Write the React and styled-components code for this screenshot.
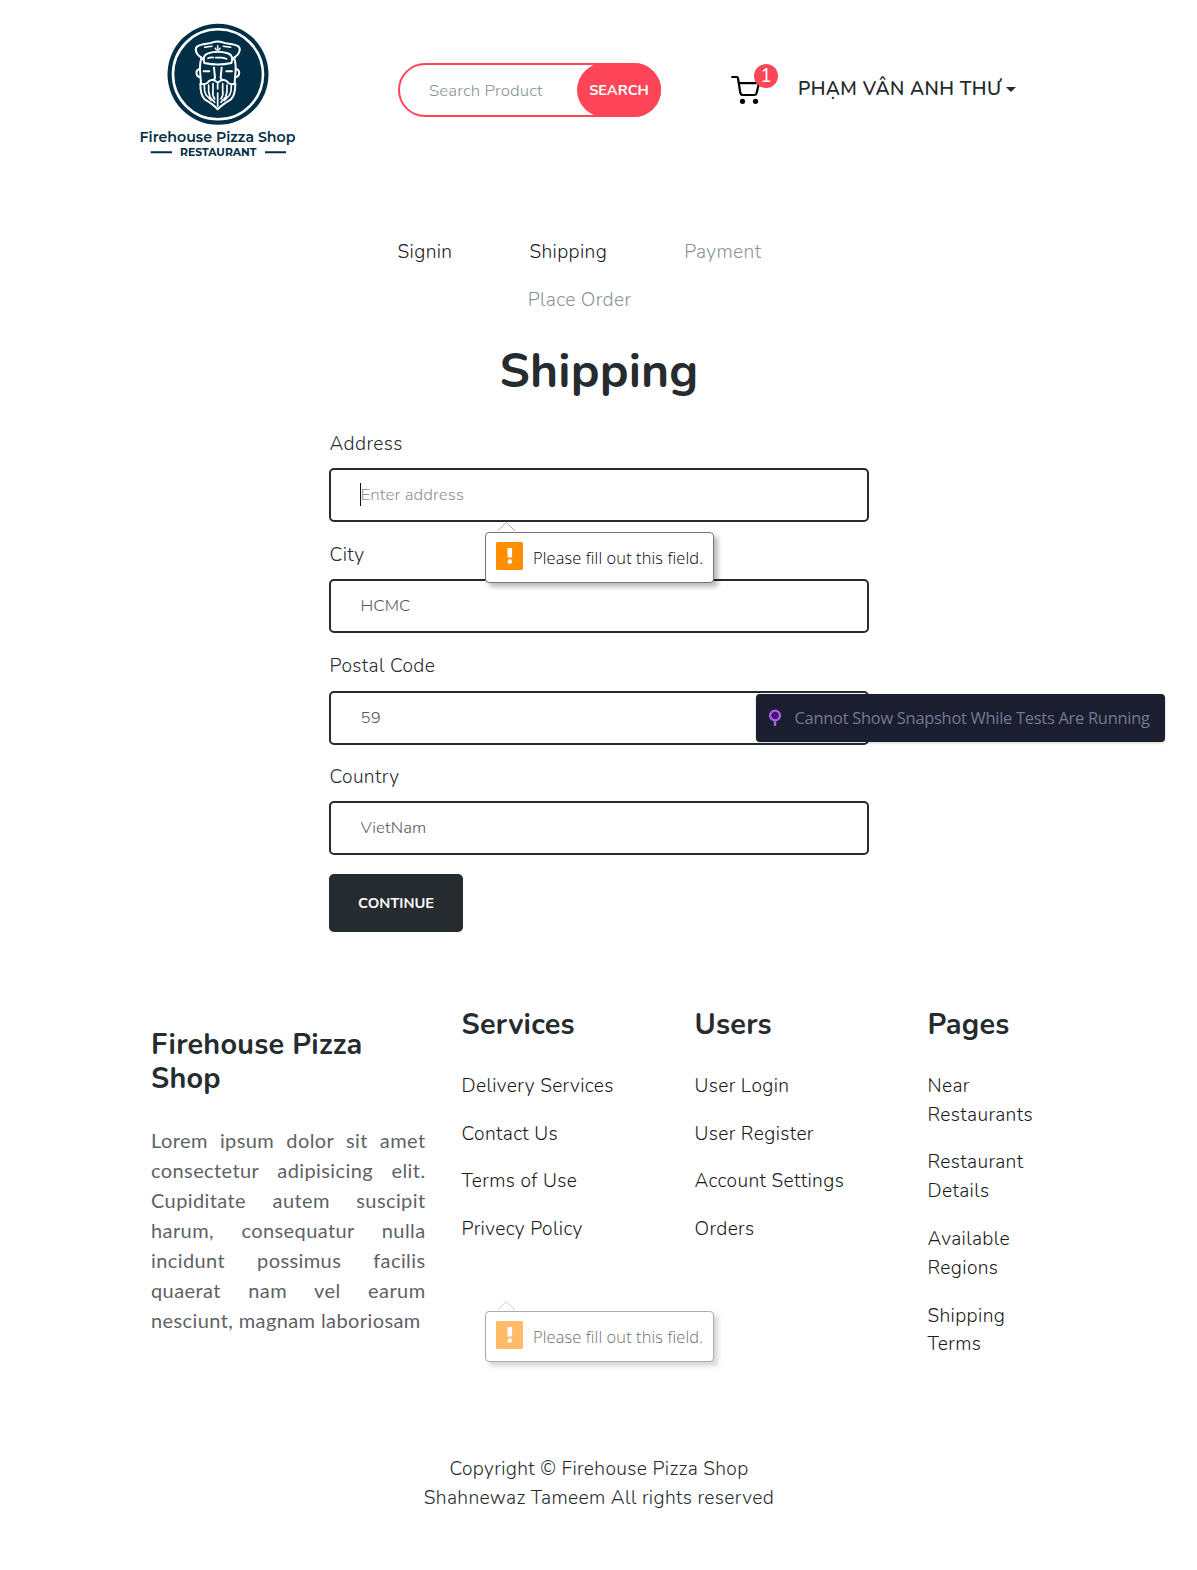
import React from 'react';
import styled, { createGlobalStyle } from 'styled-components';

const ink = '#252b2e';
const red = '#ff4557';
const navy = '#032f46';
const muted = '#8a9499';

const GlobalStyle = createGlobalStyle`
  * { box-sizing: border-box; }
  body {
    margin: 0;
    background: #fff;
    color: ${ink};
    font: 350 19.2px/28.8px Nunito, Lato, sans-serif;
    letter-spacing: 0.36px;
  }
  ul { list-style: none; margin: 0; padding: 0; }
  a { color: inherit; text-decoration: none; }
`;

const Page = styled.div`
  position: relative;
  min-height: 1570px;
  overflow: hidden;
`;

const Header = styled.header`
  display: flex;
  align-items: center;
  height: 179px;
  padding-left: 138px;
`;

const LogoSvg = styled.svg`
  display: block;
  width: 160px;
  height: 144px;
  margin-right: 100px;
  overflow: visible;
`;

const SearchForm = styled.form`
  display: flex;
  width: 263px;
  height: 54px;
  border: 2px solid ${red};
  border-radius: 27px;
  margin-right: 70px;
`;

const SearchInput = styled.input`
  flex: 1;
  min-width: 0;
  border: 0;
  outline: 0;
  padding: 1px 0 0 29px;
  background: transparent;
  font: 350 16.8px Nunito, Lato, sans-serif;
  letter-spacing: 0.12px;
  &::placeholder { color: ${muted}; opacity: 1; }
`;

const SearchButton = styled.button`
  width: 84px;
  margin: -2px -2px -2px 0;
  padding: 0;
  border: 0;
  border-radius: 27px;
  background: ${red};
  color: #fff;
  font: 700 14.6px Nunito, Lato, sans-serif;
  letter-spacing: 0;
`;

const CartLink = styled.a`
  position: relative;
  display: block;
  width: 30px;
  height: 30px;
  margin-right: 37px;
  svg { display: block; }
`;

const CartBadge = styled.span`
  position: absolute;
  left: 23px;
  top: -11px;
  width: 24px;
  height: 24px;
  border-radius: 50%;
  background: ${red};
  color: #fff;
  font-size: 19.2px;
  font-weight: 400;
  line-height: 24px;
  text-align: center;
  letter-spacing: 0;
`;

const UserMenu = styled.a`
  display: flex;
  align-items: center;
  gap: 5px;
  font-weight: 600;
  letter-spacing: 0.39px;
  white-space: nowrap;
`;

const Caret = styled.span`
  border: 5px solid transparent;
  border-top-color: ${ink};
  border-bottom: 0;
`;

const Steps = styled.nav`
  display: flex;
  flex-wrap: wrap;
  justify-content: center;
  width: 500px;
  margin: 49px auto 0;
  padding-right: 38px;
`;

const Step = styled.a`
  padding: 10px 38.5px 9px;
  line-height: 29px;
  color: ${p => (p.$muted ? muted : '#1a1a1a')};
`;

const FormSection = styled.main`
  width: 540px;
  margin: 19px auto 0;
`;

const Title = styled.h1`
  margin: 0 0 30px;
  padding-left: 1px;
  font-size: 48px;
  line-height: 57px;
  font-weight: 700;
  text-align: center;
  letter-spacing: 0.2px;
`;

const Field = styled.label`
  display: block;
  margin-bottom: ${p => (p.$loose ? 18 : 19)}px;
`;

const FieldLabel = styled.span`
  display: block;
  height: ${p => (p.$loose ? 39 : 38)}px;
  padding-left: 1px;
`;

const FieldInput = styled.input`
  display: block;
  width: 100%;
  height: 54px;
  border: 2px solid ${ink};
  border-radius: 5px;
  padding: 0 29px 1px 30px;
  outline: 0;
  background: #fff;
  color: #55595c;
  font: 360 16.8px Nunito, Lato, sans-serif;
  letter-spacing: 0.12px;
  &::placeholder { color: ${muted}; opacity: 1; }
`;

const InputWrap = styled.span`
  position: relative;
  display: block;
`;

const TextCursor = styled.span`
  position: absolute;
  left: 31px;
  top: 15px;
  width: 1px;
  height: 23px;
  background: #111;
`;

const ContinueButton = styled.button`
  display: block;
  width: 134px;
  height: 58px;
  border: 0;
  border-radius: 5px;
  padding: 0 5px 0 6px;
  background: ${ink};
  color: #fff;
  font: 700 14.7px Nunito, Lato, sans-serif;
  letter-spacing: 0;
`;

const Footer = styled.footer`
  margin-top: 76px;
`;

const FooterGrid = styled.div`
  display: grid;
  grid-template-columns: 274.5px 197px 197px 126px;
  column-gap: 36px;
  height: 447px;
  padding-left: 151px;
`;

const About = styled.section`
  padding-top: 20px;
`;

const FooterHeading = styled.h2`
  margin: 0;
  font-size: 28.8px;
  line-height: 34.3px;
  font-weight: 700;
  letter-spacing: 0.24px;
`;

const AboutText = styled.p`
  margin: 28px 0 0;
  color: #5e6265;
  font: 400 20px/30px Lato, sans-serif;
  letter-spacing: 0.4px;
  text-align: justify;
`;

const LinkList = styled.ul`
  display: grid;
  gap: 19px;
  padding-top: 29.5px;
  color: #1a1a1a;
`;

const LinkItem = styled.li`
  width: ${p => (p.$narrow ? '126px' : 'auto')};
`;

const Copyright = styled.p`
  margin: 0;
  padding-left: 1px;
  text-align: center;
`;

const Hint = styled.div`
  position: absolute;
  left: 485px;
  top: ${p => p.$top}px;
  display: flex;
  align-items: center;
  width: 229px;
  height: 51px;
  padding: 0 0 0 10px;
  border: 1px solid #767676;
  border-radius: 4px;
  background: #fff;
  box-shadow: 4px 4px 5px rgba(0, 0, 0, 0.27);
  opacity: ${p => (p.$faded ? 0.6 : 1)};
  color: #000;
  font: 330 16.4px/24px "Segoe UI", "Open Sans", sans-serif;
  letter-spacing: 0.12px;
  white-space: nowrap;
`;

const HintArrow = styled.svg`
  position: absolute;
  left: 10px;
  top: -11px;
`;

const HintIcon = styled.svg`
  flex: none;
  margin: -4px 10px 0 0;
`;

const Snackbar = styled.div`
  position: absolute;
  left: 756px;
  top: 694px;
  display: flex;
  align-items: center;
  gap: 12.500px;
  width: 409px;
  height: 48px;
  padding-left: 12px;
  border-radius: 4px;
  background: #1b1e2e;
  box-shadow: 0 1px 3px rgba(0, 0, 0, 0.2);
  color: #747994;
  font: 370 16.4px/24px "Segoe UI", "Open Sans", sans-serif;
  letter-spacing: -0.25px;
  white-space: nowrap;
`;

function Logo() {
  return (
    <LogoSvg viewBox="138 18 160 144">
      <circle cx="218" cy="74.3" r="50.5" fill={navy} />
      <circle cx="218" cy="74.3" r="45" fill="none" stroke="#fff" strokeWidth="2.6" />
      <g
        transform="translate(160 15) scale(0.3333)"
        fill="none"
        stroke="#fff"
        strokeWidth="6"
        strokeLinecap="round"
        strokeLinejoin="round"
      >
        <path d="M122 126C106 116 104 100 112 94C124 86 148 87 158 82Q173 77 188 82C198 87 222 86 235 94C243 101 240 116 225 126" />
        <path d="M133 144C128 130 132 119 144 115Q173 106 203 115C216 119 220 130 214 144Q173 153 133 144Z" />
        <path d="M122 126L131 134M225 126L216 134" />
        <path d="M144 130Q152 126 160 128M167 128H184Q194 129 200 132" strokeWidth="5" />
        <path d="M134 97L156 94M190 94L212 97M173 92V104M166 100Q167 105 173 105Q179 105 180 100" strokeWidth="4.500" />
        <path d="M124 130Q118 150 121 178L123 206M223 130Q229 150 226 178L224 206" />
        <path d="M118 162Q107 166 110 178Q112 186 120 187M229 162Q240 166 237 178Q235 186 227 187" />
        <path d="M131 169H148M199 169H216M162 158L165 188Q165 192 160 194M185 158L182 188Q182 192 187 194" />
        <path d="M173 203C160 190 148 194 142 204Q132 210 121 206Q121 240 134 253Q160 268 173 283Q187 268 213 253Q226 240 226 206Q214 210 205 204C199 194 187 190 173 203Z" />
        <path d="M133 212Q132 228 138 240M146 210Q144 230 150 246M159 206V226Q156 240 164 252M173 206V222M188 206V226Q191 240 183 252M201 210Q203 230 197 246M214 212Q215 228 209 240M173 234V274M138 240L154 256M209 240L193 256M150 246L164 262M197 246L183 262" strokeWidth="5" />
      </g>
      <g fill={navy} fontFamily="Montserrat, Lato, sans-serif" letterSpacing="0">
        <text x="139.500" y="141.700" fontSize="15" fontWeight="650" textLength="156" lengthAdjust="spacingAndGlyphs">Firehouse Pizza Shop</text>
        <text x="180" y="156" fontSize="10.800" fontWeight="700" textLength="76.500" lengthAdjust="spacingAndGlyphs">RESTAURANT</text>
        <path d="M150.700 151.300H172V153.300H150.700ZM265 151.300H286V153.300H265Z" />
      </g>
    </LogoSvg>
  );
}

function CartIcon() {
  return (
    <svg width="30" height="30" viewBox="0 0 30 30" fill="none" stroke="#000" strokeWidth="2.200" strokeLinecap="round" strokeLinejoin="round">
      <path d="M1.200 2H5.800Q6.800 2 7 3.200L9.300 17.800Q9.700 20 12 20H23.200Q25 20 25.500 18.200L28 8.200H7.800" />
      <circle cx="11.500" cy="26.300" r="2.600" fill="#000" stroke="none" />
      <circle cx="24.500" cy="26.300" r="2.600" fill="#000" stroke="none" />
    </svg>
  );
}

function ValidationHint({ top, faded }) {
  return (
    <Hint $top={top} $faded={faded}>
      <HintArrow width="20" height="9" viewBox="0 0 20 9">
        <path d="M1.500 9L10.200 0.500L19 9" fill="#fff" stroke="#a8a8a8" />
      </HintArrow>
      <HintIcon width="27" height="28" viewBox="0 0 27 28">
        <rect width="27" height="28" rx="1.500" fill="#ff8f00" />
        <rect x="11.500" y="6" width="4.600" height="9.500" fill="#fff" />
        <circle cx="13.800" cy="19.500" r="2.300" fill="#fff" />
      </HintIcon>
      Please fill out this field.
    </Hint>
  );
}

function PinIcon() {
  return (
    <svg width="14" height="18" viewBox="0 0 14 18">
      <path d="M7 11V17" stroke="#a561e6" strokeWidth="2.400" />
      <circle cx="7" cy="6.500" r="4.900" fill="#4a1277" stroke="#a561e6" strokeWidth="2.400" />
    </svg>
  );
}

const steps = [
  { name: 'Signin' },
  { name: 'Shipping' },
  { name: 'Payment', muted: true },
  { name: 'Place Order', muted: true },
];

const fields = [
  { name: 'Address', placeholder: 'Enter address', focused: true },
  { name: 'City', value: 'HCMC' },
  { name: 'Postal Code', value: '59', loose: true },
  { name: 'Country', value: 'VietNam' },
];

const columns = [
  { title: 'Services', links: ['Delivery Services', 'Contact Us', 'Terms of Use', 'Privecy Policy'] },
  { title: 'Users', links: ['User Login', 'User Register', 'Account Settings', 'Orders'] },
  { title: 'Pages', narrow: true, links: ['Near Restaurants', 'Restaurant Details', 'Available Regions', 'Shipping Terms'] },
];

export default function App() {
  return (
    <Page>
      <GlobalStyle />
      <Header>
        <Logo />
        <SearchForm>
          <SearchInput placeholder="Search Product" />
          <SearchButton type="button">SEARCH</SearchButton>
        </SearchForm>
        <CartLink>
          <CartIcon />
          <CartBadge>1</CartBadge>
        </CartLink>
        <UserMenu>
          PHẠM VÂN ANH THƯ
          <Caret />
        </UserMenu>
      </Header>

      <Steps>
        {steps.map(s => (
          <Step key={s.name} $muted={s.muted}>{s.name}</Step>
        ))}
      </Steps>

      <FormSection>
        <Title>Shipping</Title>
        {fields.map(f => (
          <Field key={f.name} $loose={f.loose}>
            <FieldLabel $loose={f.loose}>{f.name}</FieldLabel>
            <InputWrap>
              <FieldInput placeholder={f.placeholder} defaultValue={f.value} />
              {f.focused && <TextCursor />}
            </InputWrap>
          </Field>
        ))}
        <ContinueButton>CONTINUE</ContinueButton>
      </FormSection>

      <Footer>
        <FooterGrid>
          <About>
            <FooterHeading>Firehouse Pizza Shop</FooterHeading>
            <AboutText>
              Lorem ipsum dolor sit amet consectetur adipisicing elit. Cupiditate autem suscipit harum,
              consequatur nulla incidunt possimus facilis quaerat nam vel earum nesciunt, magnam laboriosam
            </AboutText>
          </About>
          {columns.map(c => (
            <section key={c.title}>
              <FooterHeading>{c.title}</FooterHeading>
              <LinkList>
                {c.links.map(l => (
                  <LinkItem key={l} $narrow={c.narrow}><a>{l}</a></LinkItem>
                ))}
              </LinkList>
            </section>
          ))}
        </FooterGrid>
        <Copyright>
          Copyright © Firehouse Pizza Shop
          <br />
          Shahnewaz Tameem All rights reserved
        </Copyright>
      </Footer>

      <ValidationHint top={532} />
      <ValidationHint top={1311} faded />
      <Snackbar>
        <PinIcon />
        Cannot Show Snapshot While Tests Are Running
      </Snackbar>
    </Page>
  );
}
